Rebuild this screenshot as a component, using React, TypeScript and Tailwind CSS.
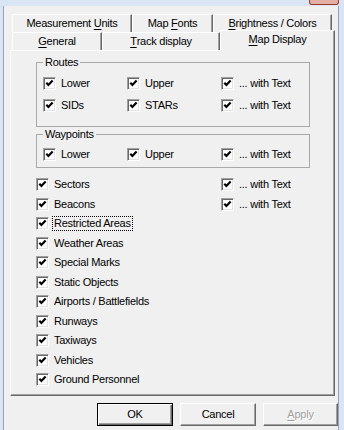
import React from "react";

function Box() {
    return (
        <span className="w-[13px] h-[13px] shrink-0 bg-white border border-t-[#a0a0a0] border-l-[#a0a0a0] border-r-white border-b-white shadow-[inset_1px_1px_#696969,inset_-1px_-1px_#e3e3e3] flex items-center justify-center">
            <svg width="9" height="9" viewBox="0 0 9 9">
                <path d="M1.3 3.8 L3.4 6 L7.6 1.6" fill="none" stroke="#000" strokeWidth="2.2" />
            </svg>
        </span>
    );
}

function Check({ label, focus }: { label: string; focus?: boolean }) {
    return (
        <div className="flex items-center gap-[5px] h-full">
            <Box />
            {focus ? (
                <span className="-ml-[2px] px-[1px] border border-dotted border-black leading-[13px]">{label}</span>
            ) : (
                <span className="leading-[13px]">{label}</span>
            )}
        </div>
    );
}

function U({ c }: { c: string }) {
    return <span className="underline underline-offset-[2px]">{c}</span>;
}

const list = [
    { label: "Sectors", text: true },
    { label: "Beacons", text: true },
    { label: "Restricted Areas", focus: true },
    { label: "Weather Areas" },
    { label: "Special Marks" },
    { label: "Static Objects" },
    { label: "Airports / Battlefields" },
    { label: "Runways" },
    { label: "Taxiways" },
    { label: "Vehicles" },
    { label: "Ground Personnel" },
];

export default function App() {
    return (
        <div className="w-[344px] h-[430px] overflow-hidden bg-[#f0f0f0] flex flex-col text-[11px] tracking-[-0.25px] text-black font-['Liberation_Sans',Arial,sans-serif]">
            {/* title bar stub */}
            <div className="h-[6px] shrink-0 bg-[#d9e5f3] flex justify-end pr-[5px]">
                <div className="w-[30px] h-[5px] bg-[#e3aea5] border-x border-b border-[#9c3a2e] rounded-b-[3px]" />
            </div>
            <div className="flex flex-1">
                <div className="w-[3px] bg-[#d9e5f3]" />
                <div className="w-px bg-[#90a5c2]" />
                <div className="w-[334px] flex flex-col pt-[8px]">
                    {/* back tab row */}
                    <div className="ml-[8px] flex h-[18px]">
                        <div className="w-[120px] flex items-center justify-center border-t border-l border-white border-r border-r-[#696969] shadow-[inset_-1px_0_#a0a0a0] rounded-tl-[2px]">
                            Measurement&nbsp;<U c="U" />nits
                        </div>
                        <div className="w-[81px] flex items-center justify-center border-t border-l border-white border-r border-r-[#696969] shadow-[inset_-1px_0_#a0a0a0] rounded-tl-[2px]">
                            Map&nbsp;<U c="F" />onts
                        </div>
                        <div className="w-[119px] flex items-center justify-center border-t border-l border-white border-r border-r-[#696969] shadow-[inset_-1px_0_#a0a0a0] rounded-tl-[2px]">
                            <U c="B" />rightness / Colors
                        </div>
                    </div>
                    {/* front tab row */}
                    <div className="ml-[8px] flex h-[18px] items-end">
                        <div className="w-[90px] h-[18px] flex items-center justify-center border-t border-l border-white border-r border-r-[#696969] shadow-[inset_-1px_0_#a0a0a0] rounded-tl-[2px]">
                            <U c="G" />eneral
                        </div>
                        <div className="w-[118px] h-[18px] flex items-center justify-center border-t border-l border-white border-r border-r-[#696969] shadow-[inset_-1px_0_#a0a0a0] rounded-tl-[2px]">
                            <U c="T" />rack display
                        </div>
                        <div className="relative z-10 w-[115px] h-[21px] -mb-[1px] pb-[3px] bg-[#f0f0f0] flex items-center justify-center border-t border-l border-white border-r border-r-[#696969] shadow-[inset_-1px_0_#a0a0a0] rounded-tl-[2px]">
                            <U c="M" />ap Display
                        </div>
                    </div>
                    {/* panel */}
                    <div className="ml-[6px] w-[325px] h-[346px] border border-t-white border-l-white border-r-[#696969] border-b-[#696969] shadow-[inset_-1px_-1px_#a0a0a0] pl-[25px] pt-[5px]">
                        <fieldset className="w-[274px] border border-[#a9a9a9] pb-[11px]">
                            <legend className="ml-[6px] px-[2px] leading-[13px]">Routes</legend>
                            <div className="pt-[5px] pl-[6px] grid grid-cols-[84px_94px_1fr] gap-y-[3px]">
                                <div className="h-[19px]"><Check label="Lower" /></div>
                                <div className="h-[19px]"><Check label="Upper" /></div>
                                <div className="h-[19px]"><Check label="... with Text" /></div>
                                <div className="h-[19px]"><Check label="SIDs" /></div>
                                <div className="h-[19px]"><Check label="STARs" /></div>
                                <div className="h-[19px]"><Check label="... with Text" /></div>
                            </div>
                        </fieldset>
                        <fieldset className="mt-[1px] w-[274px] border border-[#a9a9a9] pb-[3px]">
                            <legend className="ml-[6px] px-[2px] leading-[13px]">Waypoints</legend>
                            <div className="pt-[4px] pl-[6px] grid grid-cols-[84px_94px_1fr]">
                                <div className="h-[19px]"><Check label="Lower" /></div>
                                <div className="h-[19px]"><Check label="Upper" /></div>
                                <div className="h-[19px]"><Check label="... with Text" /></div>
                            </div>
                        </fieldset>
                        <div className="mt-[7px] flex flex-col">
                            {list.map((r) => (
                                <div key={r.label} className="h-[19.5px] grid grid-cols-[185px_1fr]">
                                    <Check label={r.label} focus={r.focus} />
                                    {r.text ? <Check label="... with Text" /> : <div />}
                                </div>
                            ))}
                        </div>
                    </div>
                    {/* buttons */}
                    <div className="mt-[7px] ml-[93px] flex gap-[7px]">
                        <button className="w-[76px] h-[23px] border border-black shadow-[inset_1px_1px_#fff,inset_-1px_-1px_#696969,inset_-2px_-2px_#a0a0a0] bg-[#f0f0f0]">
                            OK
                        </button>
                        <button className="w-[76px] h-[23px] border border-t-white border-l-white border-r-[#696969] border-b-[#696969] shadow-[inset_-1px_-1px_#a0a0a0] bg-[#f0f0f0]">
                            Cancel
                        </button>
                        <button className="w-[75px] h-[23px] border border-t-white border-l-white border-r-[#696969] border-b-[#696969] shadow-[inset_-1px_-1px_#a0a0a0] bg-[#f0f0f0] text-[#a0a0a0] [text-shadow:1px_1px_#fff]">
                            <U c="A" />pply
                        </button>
                    </div>
                </div>
                <div className="w-px bg-[#90a5c2]" />
                <div className="flex-1 bg-[#d9e5f3]" />
            </div>
        </div>
    );
}
